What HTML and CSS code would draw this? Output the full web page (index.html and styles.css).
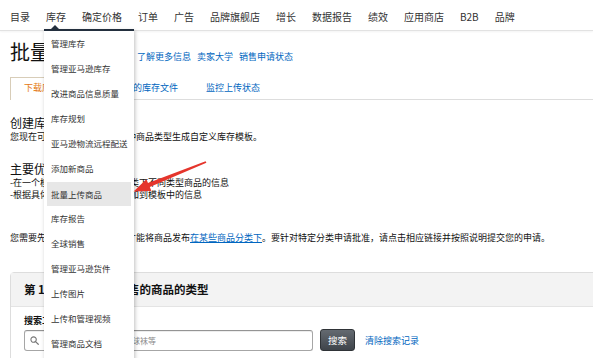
FILE: index.html
```html
<!DOCTYPE html>
<html lang="zh-CN">
<head>
<meta charset="utf-8">
<title>批量上传商品</title>
<link rel="stylesheet" href="styles.css">
</head>
<body>
<header class="topnav">
  <a class="nav-item">目录</a>
  <a class="nav-item">库存</a>
  <a class="nav-item">确定价格</a>
  <a class="nav-item">订单</a>
  <a class="nav-item">广告</a>
  <a class="nav-item">品牌旗舰店</a>
  <a class="nav-item">增长</a>
  <a class="nav-item">数据报告</a>
  <a class="nav-item">绩效</a>
  <a class="nav-item">应用商店</a>
  <a class="nav-item">B2B</a>
  <a class="nav-item">品牌</a>
</header>

<main class="page">
  <div class="title-row">
    <h1 class="title">批量上传商品</h1>
    <a class="link title-link">了解更多信息</a>
    <a class="link title-link">卖家大学</a>
    <a class="link title-link">销售申请状态</a>
  </div>

  <div class="tabs">
    <span class="tab tab-active">下载库存文件</span>
    <span class="tab">上传您的库存文件</span>
    <span class="tab">监控上传状态</span>
  </div>

  <h2 class="sec-title sec-first">创建库存文件</h2>
  <p class="txt">您现在可以根据您要销售的各种商品类型生成自定义库存模板。</p>

  <h2 class="sec-title sec-second">主要优势</h2>
  <p class="txt">-在一个模板中添加同一商品分类下不同类型商品的信息<br>-根据具体的商品类型选择要添加到模板中的信息</p>

  <p class="txt notice">您需要先获得相应批准，然后才能将商品发布<a class="link under">在某些商品分类下</a>。要针对特定分类申请批准，请点击相应链接并按照说明提交您的申请。</p>

  <section class="panel">
    <div class="panel-head">第 1 步：选择您要出售的商品的类型</div>
    <div class="panel-body">
      <div class="search-label">搜索工具</div>
      <div class="search-row">
        <div class="search-box">
          <svg class="search-icon" width="9" height="9" viewBox="0 0 10 10"><circle cx="4" cy="4" r="3" fill="none" stroke="#777" stroke-width="1.2"/><path d="M6.2 6.2 L9.2 9.2" stroke="#777" stroke-width="1.3" stroke-linecap="round"/></svg>
          <span class="placeholder">例如：手表、跑步鞋、网球袜等</span>
        </div>
        <button class="btn">搜索</button>
        <a class="link clear-link">清除搜索记录</a>
      </div>
    </div>
  </section>
</main>

<nav class="dropdown">
  <span class="caret"></span>
  <a class="dd-item">管理库存</a>
  <a class="dd-item">管理亚马逊库存</a>
  <a class="dd-item">改进商品信息质量</a>
  <a class="dd-item">库存规划</a>
  <a class="dd-item">亚马逊物流远程配送</a>
  <a class="dd-item">添加新商品</a>
  <a class="dd-item dd-hover">批量上传商品</a>
  <a class="dd-item">库存报告</a>
  <a class="dd-item">全球销售</a>
  <a class="dd-item">管理亚马逊货件</a>
  <a class="dd-item">上传图片</a>
  <a class="dd-item">上传和管理视频</a>
  <a class="dd-item">管理商品文档</a>
</nav>

<svg class="arrow" width="593" height="358" viewBox="0 0 593 358">
  <polygon fill="#e5352c" points="205.6,161.3 206.4,162.7 149.8,187.1 151.4,191 133.5,191.5 146.4,179.2 148,183 "/>
</svg>
</body>
</html>
```

FILE: styles.css
```css
html, body {
  margin: 0;
  padding: 0;
  overflow: hidden;
}
body {
  width: 593px;
  height: 358px;
  position: relative;
  background: #fff;
  font-family: "Noto Sans CJK SC", "Noto Sans", sans-serif;
  color: #111;
}
a { text-decoration: none; }

.topnav {
  display: flex;
  align-items: center;
  gap: 16px;
  height: 30px;
  padding-left: 10px;
  border-bottom: 1px solid #e2e2e2;
  box-shadow: 0 1px 2px rgba(0,0,0,0.05);
}
.nav-item {
  font-size: 10px;
  color: #333;
  line-height: 12px;
  padding-top: 3px;
}

.page {
  padding-left: 10px;
}
.title-row {
  display: flex;
  align-items: baseline;
  margin-top: 9px;
  height: 24px;
}
.title {
  margin: 0;
  font-size: 20px;
  line-height: 24px;
  font-weight: normal;
  color: #111;
}
.link { color: #0066c0; }
.title-link {
  font-size: 9px;
  margin-left: 7px;
}
.title-link + .title-link { margin-left: 6px; }

.tabs {
  display: flex;
  margin-top: 13px;
  height: 22px;
  border-bottom: 1px solid #ddd;
  margin-right: -10px;
}
.tab {
  font-size: 9px;
  line-height: 20px;
  padding: 1px 14px 0;
  color: #0066c0;
}
.tab-active {
  color: #e47911;
  border: 1px solid #d8cdb8;
  border-bottom: none;
  background: #fff;
  height: 22px;
  padding: 0 13px;
  margin-bottom: -1px;
}

.sec-title {
  margin: 0;
  font-size: 12px;
  line-height: 14px;
  font-weight: normal;
  color: #111;
}
.sec-first { margin-top: 16px; }
.sec-second { margin-top: 19px; }
.txt {
  margin: 1px 0 0;
  font-size: 9px;
  line-height: 12px;
  color: #111;
}
.notice { margin-top: 31px; }
.under { text-decoration: underline; }

.panel {
  margin-top: 28px;
  margin-right: -20px;
  border: 1px solid #ddd;
  border-radius: 4px 0 0 0;
}
.panel-head {
  height: 33px;
  line-height: 33px;
  padding-left: 13px;
  background: #f3f3f3;
  border-bottom: 1px solid #e4e4e4;
  font-size: 11.5px;
  font-weight: bold;
  color: #111;
}
.panel-body {
  padding: 8px 0 10px 13px;
}
.search-label {
  font-size: 9px;
  line-height: 12px;
  font-weight: bold;
  color: #111;
}
.search-row {
  display: flex;
  align-items: center;
  margin-top: 2px;
}
.search-box {
  display: flex;
  align-items: center;
  width: 282px;
  height: 19px;
  border: 1px solid #a6a6a6;
  border-top-color: #949494;
  border-radius: 3px;
  box-shadow: inset 0 1px 0 rgba(0,0,0,0.07);
  padding-left: 5px;
}
.search-icon { flex: none; }
.placeholder {
  margin-left: 5px;
  font-size: 8px;
  color: #888;
}
.btn {
  margin-left: 7px;
  width: 35px;
  height: 22px;
  padding: 0;
  border: 1px solid #2f3337;
  border-radius: 3px;
  background: linear-gradient(#646a71, #3f444a);
  color: #fff;
  font-family: inherit;
  font-size: 9.5px;
}
.clear-link {
  margin-left: 10px;
  font-size: 9px;
}

.dropdown {
  position: absolute;
  left: 44px;
  top: 29px;
  width: 90px;
  height: 332px;
  background: #fff;
  border-top: 2px solid #232f3e;
  box-shadow: 1px 2px 4px rgba(0,0,0,0.25);
  display: flex;
  flex-direction: column;
}
.caret {
  position: absolute;
  left: 7px;
  top: -6px;
  width: 0;
  height: 0;
  border-left: 4px solid transparent;
  border-right: 4px solid transparent;
  border-bottom: 4px solid #232f3e;
}
.dd-item {
  height: 25px;
  line-height: 25px;
  margin: 0 3px;
  padding-left: 4px;
  font-size: 8.5px;
  color: #333;
  white-space: nowrap;
}
.dd-hover {
  background: #e7e7e7;
  height: 24px;
  line-height: 24px;
  margin-top: 1px;
}

.arrow {
  position: absolute;
  left: 0;
  top: 0;
  pointer-events: none;
}
```
